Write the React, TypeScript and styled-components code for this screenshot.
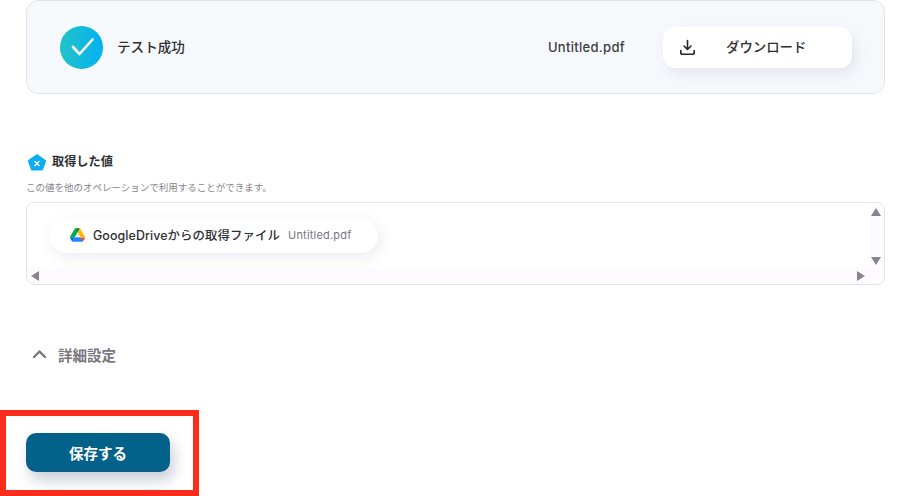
import React from 'react';
import styled, { createGlobalStyle } from 'styled-components';

const GlobalStyle = createGlobalStyle`
  html, body {
    margin: 0;
    padding: 0;
    background: #fff;
  }
  body {
    font-family: Inter, 'Noto Sans CJK JP', 'Noto Sans', sans-serif;
    color: #2e2e33;
  }
`;

const Page = styled.main`
  position: relative;
  width: 910px;
  height: 496px;
  padding: 0 25px 0 26px;
  box-sizing: border-box;
  overflow: hidden;
  display: flex;
  flex-direction: column;
`;

const ResultCard = styled.section`
  height: 94px;
  box-sizing: border-box;
  display: flex;
  align-items: center;
  padding: 0 32px 0 33px;
  background: #f6f9fc;
  border: 1px solid #e3e5ea;
  border-radius: 12px;
`;

const Status = styled.div`
  display: flex;
  align-items: center;
  gap: 14px;
  flex: 1;
  font-size: 13.6px;
  font-weight: 500;
`;

const StatusLabel = styled.span`
  padding-bottom: 2px;
`;

const CheckCircle = styled.span`
  width: 43px;
  height: 43px;
  border-radius: 50%;
  background: linear-gradient(90deg, #22c3c6 0%, #04b1f4 100%);
  display: flex;
  align-items: center;
  justify-content: center;
`;

const FileName = styled.span`
  font-size: 13px;
  font-weight: 500;
  color: #3c3c42;
  letter-spacing: 0.3px;
  margin-right: 38px;
`;

const DownloadButton = styled.button`
  width: 189px;
  height: 41px;
  border: none;
  border-radius: 12px;
  background: #fff;
  box-shadow: 4px 6px 14px rgba(90, 100, 130, 0.12);
  display: flex;
  align-items: center;
  padding: 0 0 0 16px;
  font: inherit;
  font-size: 13.4px;
  font-weight: 500;
  color: #2e2e33;
`;

const DownloadLabel = styled.span`
  margin-left: 30px;
  padding-bottom: 2px;
`;

const SectionTitle = styled.h2`
  display: flex;
  align-items: center;
  gap: 5px;
  margin: 58px 0 0 1px;
  height: 20px;
  font-size: 12.2px;
  font-weight: 700;
  line-height: 20px;
`;

const Hint = styled.p`
  margin: 10px 0 0;
  height: 12px;
  font-size: 9.5px;
  line-height: 12px;
  color: #85858c;
`;

const ValueBox = styled.div`
  position: relative;
  margin-top: 8px;
  height: 83px;
  box-sizing: border-box;
  padding: 16px 0 0 23px;
  border: 1px solid #e3e3e8;
  border-radius: 8px;
  background: linear-gradient(180deg, #fff 0, #fff 64px, #fdfbff 66px);
  &::after {
    content: '';
    position: absolute;
    top: 4px;
    right: 0;
    width: 14px;
    height: 62px;
    background: #fdfbff;
  }
`;

const ValueChip = styled.div`
  width: fit-content;
  height: 34px;
  box-sizing: border-box;
  display: flex;
  align-items: center;
  padding: 0 27px 2px 20px;
  border-radius: 17px;
  background: #fff;
  box-shadow: 3px 4px 14px rgba(110, 100, 150, 0.13);
`;

const ChipLabel = styled.span`
  margin-left: 8px;
  font-size: 12.4px;
  font-weight: 500;
  letter-spacing: 0.1px;
`;

const ChipValue = styled.span`
  margin-left: 8px;
  font-size: 11px;
  color: #77777e;
  letter-spacing: 0.2px;
`;

const ScrollArrow = styled.span<{ $side: 'up' | 'down' | 'left' | 'right' }>`
  position: absolute;
  z-index: 1;
  width: 0;
  height: 0;
  border-style: solid;
  ${({ $side }) => {
    switch ($side) {
      case 'up':
        return 'top: 5px; right: 3px; border-width: 0 5px 8px; border-color: transparent transparent #85858c;';
      case 'down':
        return 'top: 54px; right: 3px; border-width: 8px 5px 0; border-color: #85858c transparent transparent;';
      case 'left':
        return 'top: 68px; left: 4px; border-width: 5px 8px 5px 0; border-color: transparent #85858c transparent transparent;';
      default:
        return 'top: 68px; right: 19px; border-width: 5px 0 5px 8px; border-color: transparent transparent transparent #85858c;';
    }
  }}
`;

const Advanced = styled.div`
  display: flex;
  align-items: center;
  gap: 11px;
  margin: 59px 0 0 6px;
  height: 20px;
  font-size: 14.5px;
  font-weight: 700;
  color: #77777e;
`;

const SaveButton = styled.button`
  margin-top: 69px;
  width: 144px;
  height: 39px;
  border: none;
  border-radius: 10px;
  background: #04628a;
  box-shadow: 4px 8px 14px rgba(70, 80, 120, 0.28);
  color: #fff;
  font: inherit;
  font-size: 14.5px;
  font-weight: 700;
`;

const Highlight = styled.div`
  position: absolute;
  left: 0;
  top: 410px;
  width: 199px;
  height: 86px;
  box-sizing: border-box;
  border: 6px solid #fb2c1c;
  pointer-events: none;
`;

const App: React.FC = () => (
  <Page>
    <GlobalStyle />
    <ResultCard>
      <Status>
        <CheckCircle>
          <svg width="24" height="24" viewBox="0 0 24 24" fill="none">
            <path d="M3 12 L9.5 19 L22.5 4.5" stroke="#fff" strokeWidth="2.6" strokeLinecap="round" strokeLinejoin="round" />
          </svg>
        </CheckCircle>
        <StatusLabel>テスト成功</StatusLabel>
      </Status>
      <FileName>Untitled.pdf</FileName>
      <DownloadButton>
        <svg width="17" height="17" viewBox="0 0 17 17" fill="none" stroke="#26262b" strokeWidth="1.6" strokeLinecap="round" strokeLinejoin="round">
          <path d="M8.5 1.5 V10 M5 7 L8.5 10.5 L12 7" />
          <path d="M1.8 11.5 V13.5 Q1.8 15.3 3.6 15.3 H13.4 Q15.2 15.3 15.2 13.5 V11.5" />
        </svg>
        <DownloadLabel>ダウンロード</DownloadLabel>
      </DownloadButton>
    </ResultCard>

    <SectionTitle>
      <svg width="20" height="19" viewBox="0 0 20 19">
        <path d="M10 1 L18.6 7 Q19.3 7.5 19 8.4 L16 16.8 Q15.7 17.6 14.8 17.6 H5.2 Q4.3 17.6 4 16.8 L1 8.4 Q0.7 7.5 1.4 7 Z" fill="#0cadf2" />
        <path d="M8 8.5 L12 12.5 M12 8.5 L8 12.5" stroke="#fff" strokeWidth="1.4" strokeLinecap="round" />
      </svg>
      取得した値
    </SectionTitle>
    <Hint>この値を他のオペレーションで利用することができます。</Hint>
    <ValueBox>
      <ValueChip>
        <svg width="15" height="14" viewBox="0 0 87 78">
          <path d="M6.6 66.9 10.4 73.5c.8 1.4 1.9 2.5 3.2 3.3L27.5 52.7H0c0 1.6.4 3.1 1.2 4.5z" fill="#0066da" />
          <path d="M43.7 25.1 29.9 1c-1.3.8-2.5 1.9-3.3 3.3L1.2 48.2A9 9 0 0 0 0 52.7h27.5z" fill="#00ac47" />
          <path d="M73.6 76.8c1.3-.8 2.4-1.9 3.2-3.3l1.6-2.8 7.7-13.4c.8-1.4 1.2-2.9 1.2-4.5H59.8l5.9 11.5z" fill="#ea4335" />
          <path d="M43.7 25.1 57.5 1C56.2.2 54.6 0 53.1 0H34.4c-1.6 0-3.1.5-4.5 1z" fill="#00832d" />
          <path d="M59.9 52.7H27.5L13.6 76.8c1.3.8 2.9 1.2 4.5 1.2h51c1.6 0 3.1-.5 4.5-1.2z" fill="#2684fc" />
          <path d="M73.4 26.6 60.7 4.6c-.8-1.4-1.9-2.5-3.2-3.3L43.7 25.1l16.2 27.6h27.4c0-1.6-.4-3.1-1.2-4.5z" fill="#ffba00" />
        </svg>
        <ChipLabel>GoogleDriveからの取得ファイル</ChipLabel>
        <ChipValue>Untitled.pdf</ChipValue>
      </ValueChip>
      <ScrollArrow $side="up" />
      <ScrollArrow $side="down" />
      <ScrollArrow $side="left" />
      <ScrollArrow $side="right" />
    </ValueBox>

    <Advanced>
      <svg width="15" height="10" viewBox="0 0 15 10" fill="none">
        <path d="M2 8 L7.5 2.5 L13 8" stroke="#77777e" strokeWidth="2.4" strokeLinecap="round" strokeLinejoin="round" />
      </svg>
      詳細設定
    </Advanced>

    <SaveButton>保存する</SaveButton>
    <Highlight />
  </Page>
);

export default App;
